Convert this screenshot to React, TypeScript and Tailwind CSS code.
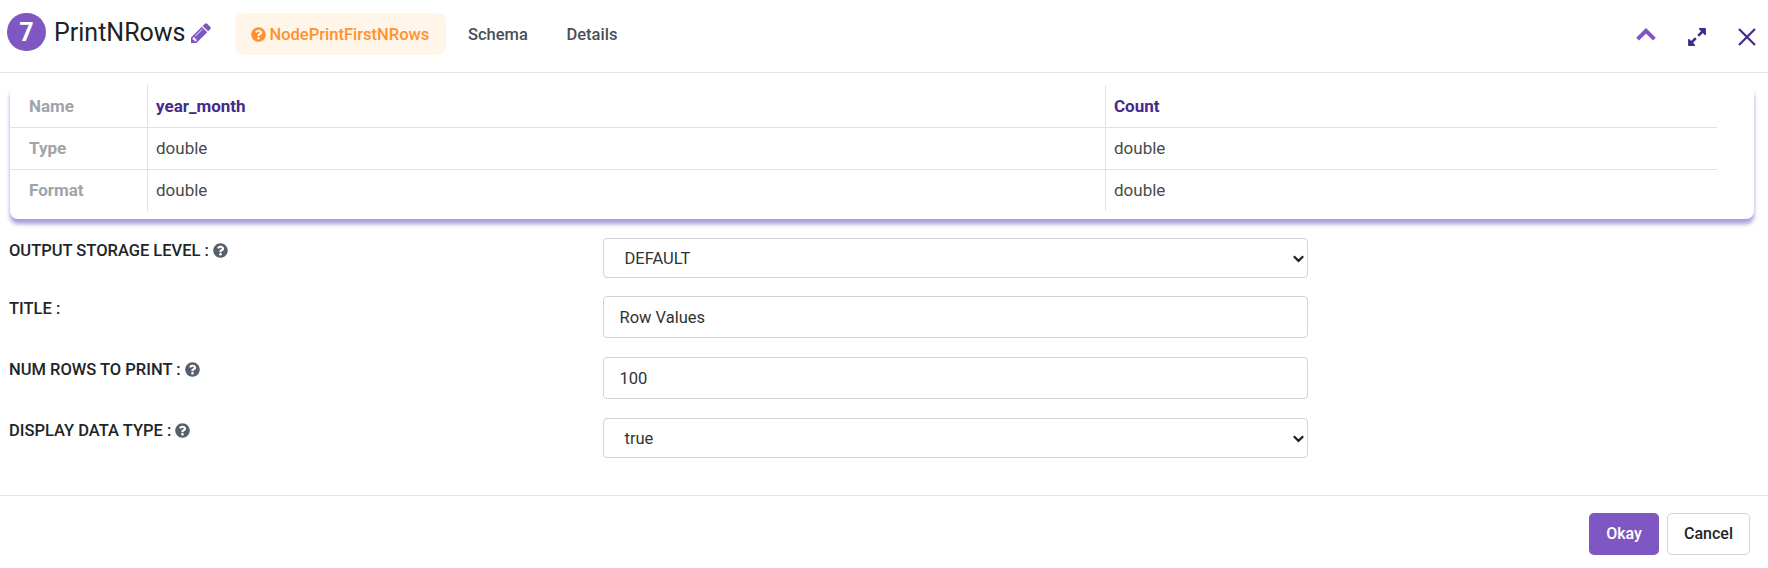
import React from "react";
import { FaQuestionCircle } from "react-icons/fa";

const columns = [
  { name: "year_month", type: "double", format: "double" },
  { name: "Count", type: "double", format: "double" },
];

function PencilIcon() {
  return (
    <svg viewBox="0 0 1536 1536" className="mt-[1px] h-[20px] w-[20px] shrink-0" fill="#7e57c2">
      <path d="M363 1408l91-91-235-235-91 91v107h128v128h107zM886 480q0-22-22-22-10 0-17 7l-542 542q-7 7-7 17 0 22 22 22 10 0 17-7l542-542q7-7 7-17zM832 288l416 416-832 832H0v-416zM1515 384q0 53-37 90l-166 166-416-416 166-165q36-38 90-38 53 0 91 38l235 234q37 39 37 91z" />
    </svg>
  );
}

function ChevronUp() {
  return (
    <svg width="20" height="13" viewBox="0 0 20 13" fill="none" stroke="#7e57c2" strokeWidth="4" className="mb-[1px]">
      <path d="M1.6 11.2 10 2.9l8.4 8.3" />
    </svg>
  );
}

function ExpandIcon() {
  return (
    <svg width="18" height="18" viewBox="0 0 18 18" fill="#432a8b" stroke="#432a8b">
      <path d="M10.2 7.8 15 3M7.8 10.2 3 15" strokeWidth="2.6" fill="none" />
      <path d="M11.6.8h5.6v5.6zM6.4 17.2H.8v-5.6z" strokeWidth="1.4" strokeLinejoin="round" />
    </svg>
  );
}

function CloseIcon() {
  return (
    <svg width="18" height="18" viewBox="0 0 18 18" fill="none" stroke="#432a8b" strokeWidth="2.2">
      <path d="M1 1l16 16M17 1 1 17" />
    </svg>
  );
}

function Label({ text, help }: { text: string; help?: boolean }) {
  return (
    <div className="mt-[1px] flex h-6 w-[594px] shrink-0 items-center text-[16.5px] font-medium text-[#212529]">
      <span>{text}</span>
      {help && <FaQuestionCircle className="mb-[2px] ml-[4px] h-[15px] w-[15px] text-[#56606b]" />}
    </div>
  );
}

function Select({ value }: { value: string }) {
  return (
    <div className="flex h-10 w-[705px] items-center justify-between rounded-[4px] border border-[#ced4da] pl-[20.5px] pr-[3.5px] text-[16.5px] text-[#333]">
      <span className="pt-[2px]">{value}</span>
      <svg width="11" height="8" viewBox="0 0 11 8" fill="none" stroke="#212121" strokeWidth="2.2" className="mt-[1px]">
        <path d="M.8 1.2 5.5 5.9l4.7-4.7" />
      </svg>
    </div>
  );
}

function TextBox({ value }: { value: string }) {
  return (
    <div className="flex h-[42px] w-[705px] items-center rounded-[4px] border border-[#ced4da] pl-[15.5px] pt-[2px] text-[16.5px] text-[#333]">
      {value}
    </div>
  );
}

export default function App() {
  return (
    <div className="flex h-[568px] w-[1768px] flex-col overflow-hidden bg-white font-['Roboto',sans-serif] text-[17px] leading-6 text-[#4a4a4a]">
      <header className="flex h-[73px] shrink-0 items-start border-b border-[#e5e5e5] pl-[7px] pt-[13px]">
        <div className="flex h-[38px] w-[39px] items-center justify-center rounded-full bg-[#7e57c2] pt-[2px] text-[25px] font-bold text-white">7</div>
        <div className="ml-[8px] flex h-[38px] w-[181px] items-center text-[25px] text-[#212121]">
          <span className="w-[136.5px] pt-[1px]">PrintNRows</span>
          <PencilIcon />
        </div>
        <nav className="flex h-[42px] items-center text-[16.5px] font-medium text-[#495057]">
          <div className="flex h-full w-[211px] items-center rounded-[8px] bg-[#fff5e8] pl-[16px] text-[#ff922e]">
            <FaQuestionCircle className="mr-[3.5px] h-[15px] w-[15px]" />
            <span className="pt-[1px]">NodePrintFirstNRows</span>
          </div>
          <span className="ml-[22px] w-[98.5px] pt-[1px]">Schema</span>
          <span className="pt-[1px]">Details</span>
        </nav>
        <div className="ml-auto mr-[12px] mt-[15px] flex items-start">
          <ChevronUp />
          <div className="ml-[32px]"><ExpandIcon /></div>
          <div className="ml-[32px]"><CloseIcon /></div>
        </div>
      </header>

      <main className="flex h-[423px] shrink-0 flex-col border-b border-[#e5e5e5] px-[9px] pt-[12px]">
        <section className="ml-[1px] h-[134px] w-[1744px] rounded-[8px] bg-white shadow-[0_5px_4px_#a99fd8]">
          <table className="w-[1707px] table-fixed border-collapse text-left">
            <colgroup>
              <col className="w-[137px]" />
              <col className="w-[958px]" />
              <col />
            </colgroup>
            <tbody>
              <tr className="h-[42px] border-b border-[#dee2e6] font-bold text-[#432a8b]">
                <th className="pl-[19px] text-[#9ea4aa]">Name</th>
                {columns.map((c) => (
                  <td key={c.name} className="border-l border-[#dee2e6] pl-[8.5px]">{c.name}</td>
                ))}
              </tr>
              <tr className="h-[42px] border-b border-[#dee2e6]">
                <th className="pl-[19px] text-[#9ea4aa]">Type</th>
                {columns.map((c) => (
                  <td key={c.name} className="border-l border-[#dee2e6] pl-[8.5px]">{c.type}</td>
                ))}
              </tr>
              <tr className="h-[42px]">
                <th className="pl-[19px] text-[#9ea4aa]">Format</th>
                {columns.map((c) => (
                  <td key={c.name} className="border-l border-[#dee2e6] pl-[8.5px]">{c.format}</td>
                ))}
              </tr>
            </tbody>
          </table>
        </section>

        <form className="mt-[19px] flex flex-col">
          <div className="flex h-[58px]">
            <Label text="OUTPUT STORAGE LEVEL :" help />
            <Select value="DEFAULT" />
          </div>
          <div className="flex h-[61px]">
            <Label text="TITLE :" />
            <TextBox value="Row Values" />
          </div>
          <div className="flex h-[61px]">
            <Label text="NUM ROWS TO PRINT :" help />
            <TextBox value="100" />
          </div>
          <div className="flex h-[58px]">
            <Label text="DISPLAY DATA TYPE :" help />
            <Select value="true" />
          </div>
        </form>
      </main>

      <footer className="flex justify-end gap-[8px] pr-[18px] pt-[17px] text-[16px] font-medium">
        <button className="h-[42px] w-[70px] rounded-[5px] bg-[#7e57c2] text-white">Okay</button>
        <button className="h-[42px] w-[83px] rounded-[5px] border border-[#ced4da] bg-white text-[#212529]">Cancel</button>
      </footer>
    </div>
  );
}
